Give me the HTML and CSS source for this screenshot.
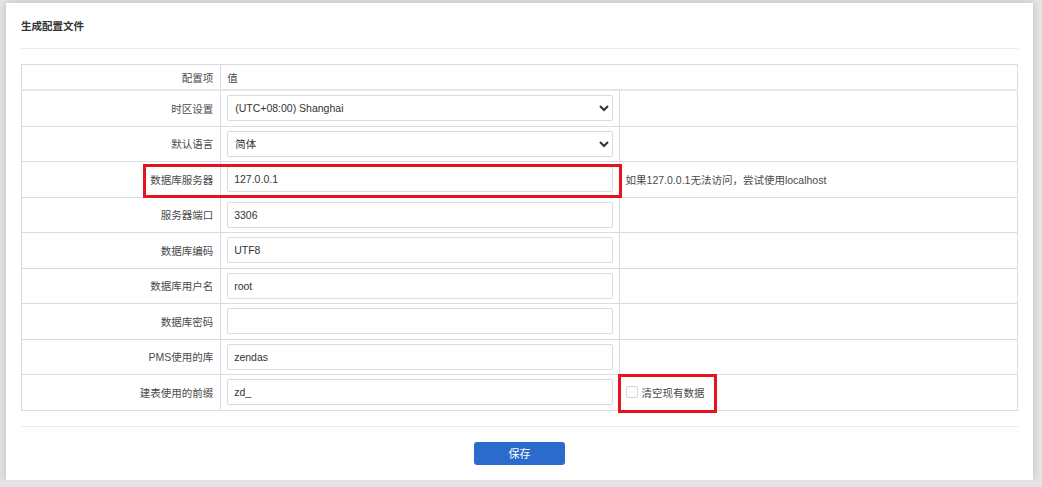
FILE: index.html
```html
<!DOCTYPE html>
<html>
    <head>
        <title>生成配置文件</title>
        <link rel="stylesheet" href="styles.css">
    </head>
    <body>
        <div class="panel">
            <div class="panel-head">生成配置文件</div>
            <table class="config">
                <tr class="head-row">
                    <td class="label">配置项</td>
                    <td colspan="2">值</td>
                </tr>
                <tr>
                    <td class="label">时区设置</td>
                    <td class="val">
                        <select class="field">
                            <option>(UTC+08:00) Shanghai</option>
                        </select>
                    </td>
                    <td></td>
                </tr>
                <tr>
                    <td class="label">默认语言</td>
                    <td class="val">
                        <select class="field">
                            <option>简体</option>
                        </select>
                    </td>
                    <td></td>
                </tr>
                <tr>
                    <td class="label">数据库服务器</td>
                    <td class="val"><input class="field" type="text" value="127.0.0.1"/></td>
                    <td class="hint">如果127.0.0.1无法访问，尝试使用localhost</td>
                </tr>
                <tr>
                    <td class="label">服务器端口</td>
                    <td class="val"><input class="field" type="text" value="3306"/></td>
                    <td></td>
                </tr>
                <tr>
                    <td class="label">数据库编码</td>
                    <td class="val"><input class="field" type="text" value="UTF8"/></td>
                    <td></td>
                </tr>
                <tr>
                    <td class="label">数据库用户名</td>
                    <td class="val"><input class="field" type="text" value="root"/></td>
                    <td></td>
                </tr>
                <tr>
                    <td class="label">数据库密码</td>
                    <td class="val"><input class="field" type="password" value=""/></td>
                    <td></td>
                </tr>
                <tr>
                    <td class="label">PMS使用的库</td>
                    <td class="val"><input class="field" type="text" value="zendas"/></td>
                    <td></td>
                </tr>
                <tr>
                    <td class="label">建表使用的前缀</td>
                    <td class="val"><input class="field" type="text" value="zd_"/></td>
                    <td class="hint">
                        <label class="check"><span class="box"></span>清空现有数据</label>
                    </td>
                </tr>
            </table>
            <div class="panel-foot">
                <button class="btn-save" type="button">保存</button>
            </div>
            <div class="mark mark-server"></div>
            <div class="mark mark-clear"></div>
        </div>
    </body>
</html>
```
FILE: styles.css
```css
body{margin:0px; padding:0px; background:#e4e4e4; font-family:"Liberation Sans","Noto Sans CJK SC",sans-serif; font-size:10.5px; color:#333;}
.panel{position:relative; box-sizing:border-box; margin:3px 0 0 6px; width:1027px; height:477px; padding:0 15px; background:#fff; box-shadow:0 0 8px rgba(0,0,0,0.18);}
.panel-head{height:45px; line-height:46px; font-weight:bold; border-bottom:1px solid #ebebeb;}
.config{margin-top:15px; width:100%; border-collapse:collapse; table-layout:fixed; border:1px solid #d9dbe6;}
.config td{border:1px solid #d9dbe6; height:34.5px; padding:0 6px; color:#4a4a4a;}
.config .head-row td{height:24px; border-bottom:2px solid #e6e6ee;}
.config td.label{width:20%; text-align:right; padding-right:7px; box-sizing:border-box;}
.config td.val{width:40%;}
.field{display:block; box-sizing:border-box; width:100%; height:26px; border:1px solid #dcdcdc; border-radius:2px; padding:0 6px; background:#fff; font-family:inherit; font-size:10.5px; color:#333; outline:none;}
select.field{padding:0 3px;}
.hint{color:#555;}
.check{display:flex; align-items:center;}
.box{display:inline-block; width:10px; height:10px; border:1px solid #d6d6d6; border-radius:2px; margin-right:4px;}
.panel-foot{margin-top:15px; border-top:1px solid #ebebeb; padding-top:15px; text-align:center;}
.btn-save{width:91px; height:23px; border:none; border-radius:3px; background:#2b6bcb; color:#fff; font-family:inherit; font-size:11px;}
.mark{position:absolute; border:3px solid #e5131d; box-sizing:border-box;}
.mark-server{left:137px; top:161px; width:479px; height:34px;}
.mark-clear{left:612px; top:371px; width:99px; height:39px;}
```
